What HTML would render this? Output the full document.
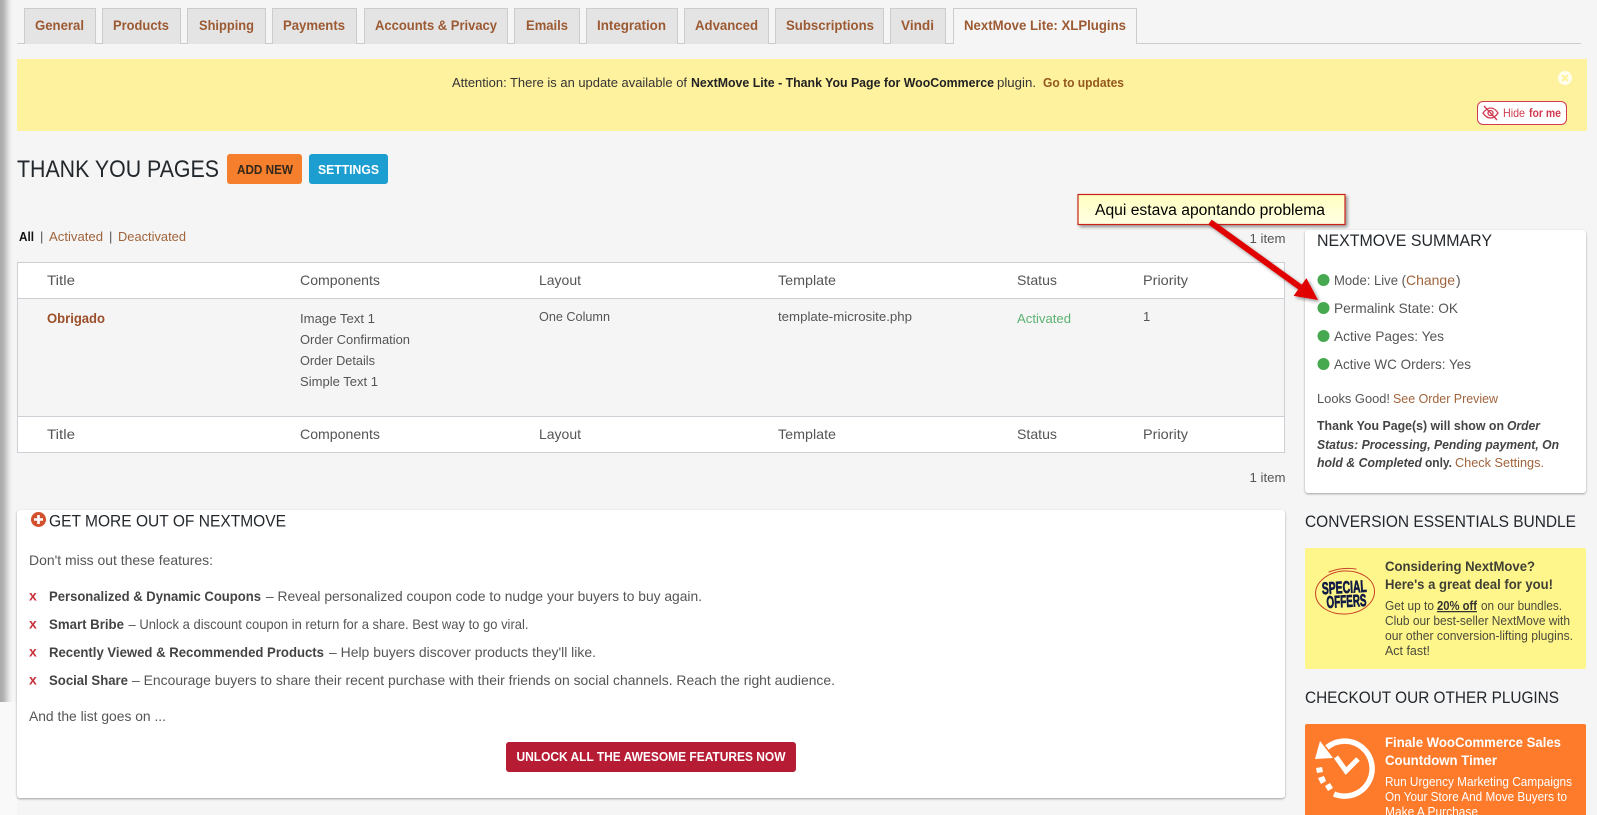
<!DOCTYPE html>
<html lang="en"><head><meta charset="utf-8"><title>Thank You Pages</title>
<style>
html,body{margin:0;padding:0;width:1597px;height:815px;overflow:hidden;background:#f5f5f5}
.b{position:absolute;box-sizing:border-box}
.tab{top:8px;height:36px;background:#e4e4e4;border:1px solid #ccc;border-bottom:0}
svg{position:absolute;left:0;top:0}
text{font-family:"Liberation Sans",Arial,sans-serif;font-size:13.5px;fill:#555}
.t{font-size:14px;font-weight:700;fill:#9c5a33}
.h{font-size:14px}
.n{font-size:13px}
.l{fill:#a0643c}
.k{fill:#444;font-weight:700}
.s{font-size:17px;fill:#23282d}
.w{fill:#fff}
</style></head>
<body>
<div class="b" style="left:0;top:0;width:12px;height:702px;background:linear-gradient(90deg,#a8a8a8 0,#b4b4b4 30%,#e4e4e4 75%,#f5f5f5 100%)"></div>
<div class="b" style="left:0;top:702px;width:17px;height:113px;background:#f9f9f9"></div>
<div class="b" style="left:17px;top:43px;width:1564px;height:1px;background:#ccc"></div>
<div class="b tab" style="left:24px;width:72px"></div>
<div class="b tab" style="left:102px;width:79px"></div>
<div class="b tab" style="left:187px;width:79px"></div>
<div class="b tab" style="left:272px;width:85px"></div>
<div class="b tab" style="left:364px;width:144px"></div>
<div class="b tab" style="left:514px;width:66px"></div>
<div class="b tab" style="left:586px;width:92px"></div>
<div class="b tab" style="left:684px;width:85px"></div>
<div class="b tab" style="left:775px;width:109px"></div>
<div class="b tab" style="left:890px;width:56px"></div>
<div class="b tab" style="left:953px;width:184px;background:#f5f5f5"></div>
<div class="b" style="left:17px;top:59px;width:1570px;height:72px;background:#fff29f"></div>
<div class="b" style="left:1477px;top:101px;width:90px;height:24px;background:#fff;border:1px solid #d23a50;border-radius:6px"></div>
<div class="b" style="left:227px;top:154px;width:75px;height:30px;background:#f57f2c;border-radius:3px"></div>
<div class="b" style="left:309px;top:154px;width:79px;height:30px;background:#1c9ed1;border-radius:3px"></div>
<div class="b" style="left:17px;top:262px;width:1268px;height:191px;background:#f5f5f5;border:1px solid #ccd0d4"></div>
<div class="b" style="left:18px;top:263px;width:1266px;height:36px;background:#fff;border-bottom:1px solid #ccd0d4"></div>
<div class="b" style="left:18px;top:416px;width:1266px;height:36px;background:#fff;border-top:1px solid #ccd0d4"></div>
<div class="b" style="left:1305px;top:230px;width:281px;height:263px;background:#fff;border-radius:3px;box-shadow:0 1px 2px rgba(0,0,0,.35)"></div>
<div class="b" style="left:17px;top:510px;width:1268px;height:288px;background:#fff;border-radius:3px;box-shadow:0 1px 2px rgba(0,0,0,.35)"></div>
<div class="b" style="left:506px;top:742px;width:290px;height:30px;background:#b71c35;border-radius:3px"></div>
<div class="b" style="left:1305px;top:548px;width:281px;height:121px;background:#fef68a;border-radius:2px"></div>
<div class="b" style="left:1305px;top:724px;width:281px;height:91px;background:#fe7b2c;border-radius:2px 2px 0 0"></div>
<svg width="1597" height="815" viewBox="0 0 1597 815" xmlns="http://www.w3.org/2000/svg">
<defs><filter id="sh" x="-20%" y="-20%" width="140%" height="140%"><feDropShadow dx="2" dy="2" stdDeviation="1.5" flood-color="#000" flood-opacity=".4"/></filter>
<linearGradient id="cg" x1="0" y1="0" x2="0" y2="1"><stop offset="0" stop-color="#ffffc0"/><stop offset="1" stop-color="#ffffe4"/></linearGradient></defs>
<text class="t" x="35" y="30" textLength="49" lengthAdjust="spacingAndGlyphs">General</text>
<text class="t" x="113" y="30" textLength="56" lengthAdjust="spacingAndGlyphs">Products</text>
<text class="t" x="199" y="30" textLength="55" lengthAdjust="spacingAndGlyphs">Shipping</text>
<text class="t" x="283" y="30" textLength="62" lengthAdjust="spacingAndGlyphs">Payments</text>
<text class="t" x="375" y="30" textLength="122" lengthAdjust="spacingAndGlyphs">Accounts &amp; Privacy</text>
<text class="t" x="526" y="30" textLength="42" lengthAdjust="spacingAndGlyphs">Emails</text>
<text class="t" x="597" y="30" textLength="69" lengthAdjust="spacingAndGlyphs">Integration</text>
<text class="t" x="695" y="30" textLength="63" lengthAdjust="spacingAndGlyphs">Advanced</text>
<text class="t" x="786" y="30" textLength="88" lengthAdjust="spacingAndGlyphs">Subscriptions</text>
<text class="t" x="901" y="30" textLength="33" lengthAdjust="spacingAndGlyphs">Vindi</text>
<text class="t" x="964" y="30" textLength="162" lengthAdjust="spacingAndGlyphs">NextMove Lite: XLPlugins</text>

<text class="n" style="fill:#333" x="452" y="87" textLength="235" lengthAdjust="spacingAndGlyphs">Attention: There is an update available of</text>
<text class="n" style="fill:#222;font-weight:700" x="691" y="87" textLength="303" lengthAdjust="spacingAndGlyphs">NextMove Lite - Thank You Page for WooCommerce</text>
<text class="n" style="fill:#333" x="997" y="87" textLength="39" lengthAdjust="spacingAndGlyphs">plugin.</text>
<text class="n" style="fill:#93591f;font-weight:700" x="1043" y="87" textLength="81" lengthAdjust="spacingAndGlyphs">Go to updates</text>
<circle cx="1565" cy="78" r="7" fill="#fff" fill-opacity=".8"/>
<path d="M1562 75l6 6m0-6l-6 6" stroke="#fff29f" stroke-width="2"/>
<g fill="none" stroke="#d23a50" stroke-width="1.3"><path d="M1483 113c3-4 5-5 7.500-5s5 1 7.500 5c-2.500 4-5 5-7.500 5s-5-1-7.500-5z"/><circle cx="1490.500" cy="113" r="2.500"/><path d="M1484 106l13 14"/></g>
<text class="n" style="fill:#d23a50;font-size:12px" x="1503" y="117" textLength="22" lengthAdjust="spacingAndGlyphs">Hide</text>
<text class="n" style="fill:#d23a50;font-size:12px;font-weight:700" x="1529" y="117" textLength="32" lengthAdjust="spacingAndGlyphs">for me</text>

<text style="font-size:24px;fill:#23282d" x="17" y="177" textLength="202" lengthAdjust="spacingAndGlyphs">THANK YOU PAGES</text>
<text class="n" style="fill:#32281c;font-weight:700" x="237" y="174" textLength="56" lengthAdjust="spacingAndGlyphs">ADD NEW</text>
<text class="n w" style="font-weight:700" x="318" y="174" textLength="61" lengthAdjust="spacingAndGlyphs">SETTINGS</text>

<text class="n" style="fill:#111;font-weight:700" x="19" y="241" textLength="15" lengthAdjust="spacingAndGlyphs">All</text>
<text class="n" x="40" y="241">|</text>
<text class="n l" x="49" y="241" textLength="54" lengthAdjust="spacingAndGlyphs">Activated</text>
<text class="n" x="109" y="241">|</text>
<text class="n l" x="118" y="241" textLength="68" lengthAdjust="spacingAndGlyphs">Deactivated</text>
<text class="n" x="1249.500" y="243" textLength="36" lengthAdjust="spacingAndGlyphs">1 item</text>

<text class="h" x="47" y="285" textLength="28" lengthAdjust="spacingAndGlyphs">Title</text>
<text class="h" x="300" y="285" textLength="80" lengthAdjust="spacingAndGlyphs">Components</text>
<text class="h" x="539" y="285" textLength="42" lengthAdjust="spacingAndGlyphs">Layout</text>
<text class="h" x="778" y="285" textLength="58" lengthAdjust="spacingAndGlyphs">Template</text>
<text class="h" x="1017" y="285" textLength="40" lengthAdjust="spacingAndGlyphs">Status</text>
<text class="h" x="1143" y="285" textLength="45" lengthAdjust="spacingAndGlyphs">Priority</text>

<text class="h" style="font-weight:700;fill:#9c4f2a" x="47" y="323" textLength="58" lengthAdjust="spacingAndGlyphs">Obrigado</text>
<text class="n" x="300" y="323" textLength="75" lengthAdjust="spacingAndGlyphs">Image Text 1</text>
<text class="n" x="300" y="344" textLength="110" lengthAdjust="spacingAndGlyphs">Order Confirmation</text>
<text class="n" x="300" y="365" textLength="75" lengthAdjust="spacingAndGlyphs">Order Details</text>
<text class="n" x="300" y="386" textLength="78" lengthAdjust="spacingAndGlyphs">Simple Text 1</text>
<text class="n" x="539" y="321" textLength="71" lengthAdjust="spacingAndGlyphs">One Column</text>
<text class="n" x="778" y="321" textLength="134" lengthAdjust="spacingAndGlyphs">template-microsite.php</text>
<text class="n" style="fill:#5cb270" x="1017" y="323" textLength="54" lengthAdjust="spacingAndGlyphs">Activated</text>
<text class="n" x="1143" y="321">1</text>

<text class="h" x="47" y="439" textLength="28" lengthAdjust="spacingAndGlyphs">Title</text>
<text class="h" x="300" y="439" textLength="80" lengthAdjust="spacingAndGlyphs">Components</text>
<text class="h" x="539" y="439" textLength="42" lengthAdjust="spacingAndGlyphs">Layout</text>
<text class="h" x="778" y="439" textLength="58" lengthAdjust="spacingAndGlyphs">Template</text>
<text class="h" x="1017" y="439" textLength="40" lengthAdjust="spacingAndGlyphs">Status</text>
<text class="h" x="1143" y="439" textLength="45" lengthAdjust="spacingAndGlyphs">Priority</text>
<text class="n" x="1249.500" y="482" textLength="36" lengthAdjust="spacingAndGlyphs">1 item</text>

<text class="s" x="1317" y="246" textLength="175" lengthAdjust="spacingAndGlyphs">NEXTMOVE SUMMARY</text>
<circle cx="1323.500" cy="280" r="6" fill="#46a950"/><circle cx="1323.500" cy="308" r="6" fill="#46a950"/><circle cx="1323.500" cy="336" r="6" fill="#46a950"/><circle cx="1323.500" cy="364" r="6" fill="#46a950"/>
<text class="h" x="1334" y="285" textLength="72" lengthAdjust="spacingAndGlyphs">Mode: Live (</text>
<text class="h l" x="1406" y="285" textLength="49" lengthAdjust="spacingAndGlyphs">Change</text>
<text class="h" x="1456" y="285">)</text>
<text class="h" x="1334" y="313" textLength="124" lengthAdjust="spacingAndGlyphs">Permalink State: OK</text>
<text class="h" x="1334" y="341" textLength="110" lengthAdjust="spacingAndGlyphs">Active Pages: Yes</text>
<text class="h" x="1334" y="369" textLength="137" lengthAdjust="spacingAndGlyphs">Active WC Orders: Yes</text>
<text class="n" x="1317" y="403" textLength="73" lengthAdjust="spacingAndGlyphs">Looks Good!</text>
<text class="n l" x="1393" y="403" textLength="105" lengthAdjust="spacingAndGlyphs">See Order Preview</text>
<text class="n k" x="1317" y="430" textLength="187" lengthAdjust="spacingAndGlyphs">Thank You Page(s) will show on</text>
<text class="n k" style="font-style:italic" x="1507" y="430" textLength="33" lengthAdjust="spacingAndGlyphs">Order</text>
<text class="n k" style="font-style:italic" x="1317" y="449" textLength="242" lengthAdjust="spacingAndGlyphs">Status: Processing, Pending payment, On</text>
<text class="n k" style="font-style:italic" x="1317" y="467" textLength="105" lengthAdjust="spacingAndGlyphs">hold &amp; Completed</text>
<text class="n k" x="1425" y="467" textLength="27" lengthAdjust="spacingAndGlyphs">only.</text>
<text class="n l" x="1455" y="467" textLength="89" lengthAdjust="spacingAndGlyphs">Check Settings.</text>

<text class="s" x="1305" y="527" textLength="271" lengthAdjust="spacingAndGlyphs">CONVERSION ESSENTIALS BUNDLE</text>
<g transform="rotate(-4 1345 592)"><ellipse cx="1345" cy="592.500" rx="29.500" ry="21.500" fill="none" stroke="#c8402a" stroke-width="1"/><path d="M1330 571c10-3 20-3 28-1" fill="none" stroke="#c8402a" stroke-width="1"/></g>
<g transform="rotate(-3 1345 592)">
<text style="fill:#101a44;font-size:17px;font-weight:700;stroke:#101a44;stroke-width:.7" x="1322" y="593" textLength="45" lengthAdjust="spacingAndGlyphs">SPECIAL</text>
<text style="fill:#101a44;font-size:17px;font-weight:700;stroke:#101a44;stroke-width:.7" x="1326" y="607" textLength="40" lengthAdjust="spacingAndGlyphs">OFFERS</text></g>
<text class="h" style="font-weight:700;fill:#3f3f35" x="1385" y="571" textLength="150" lengthAdjust="spacingAndGlyphs">Considering NextMove?</text>
<text class="h" style="font-weight:700;fill:#3f3f35" x="1385" y="589" textLength="168" lengthAdjust="spacingAndGlyphs">Here's a great deal for you!</text>
<text class="n" style="fill:#4a4a3c;font-size:12.5px" x="1385" y="610" textLength="49" lengthAdjust="spacingAndGlyphs">Get up to</text>
<text class="n" style="fill:#333;font-size:12.5px;font-weight:700;text-decoration:underline" x="1437" y="610" textLength="40" lengthAdjust="spacingAndGlyphs">20% off</text>
<text class="n" style="fill:#4a4a3c;font-size:12.5px" x="1481" y="610" textLength="81" lengthAdjust="spacingAndGlyphs">on our bundles.</text>
<text class="n" style="fill:#4a4a3c;font-size:12.5px" x="1385" y="625" textLength="185" lengthAdjust="spacingAndGlyphs">Club our best-seller NextMove with</text>
<text class="n" style="fill:#4a4a3c;font-size:12.5px" x="1385" y="640" textLength="188" lengthAdjust="spacingAndGlyphs">our other conversion-lifting plugins.</text>
<text class="n" style="fill:#4a4a3c;font-size:12.5px" x="1385" y="655" textLength="45" lengthAdjust="spacingAndGlyphs">Act fast!</text>

<text class="s" x="1305" y="703" textLength="254" lengthAdjust="spacingAndGlyphs">CHECKOUT OUR OTHER PLUGINS</text>
<g fill="none" stroke="#fff" stroke-linecap="butt">
<path d="M1327 747.500A27.500 27.500 0 1 1 1334 794" stroke-width="5.500"/>
<path d="M1336 757l10 14 12-12" stroke-width="5"/>
</g>
<g fill="#fff"><path d="M1320 741l-5 18 18-1z"/><path d="M1316 768l6-1 1 5-6 1z"/><path d="M1318 778l6-2 2 5-5 3z"/><path d="M1325 786l5-3 3 5-5 3z"/></g>
<text class="h w" style="font-weight:700" x="1385" y="747" textLength="176" lengthAdjust="spacingAndGlyphs">Finale WooCommerce Sales</text>
<text class="h w" style="font-weight:700" x="1385" y="765" textLength="112" lengthAdjust="spacingAndGlyphs">Countdown Timer</text>
<text class="n w" style="font-size:12.5px" x="1385" y="786" textLength="187" lengthAdjust="spacingAndGlyphs">Run Urgency Marketing Campaigns</text>
<text class="n w" style="font-size:12.5px" x="1385" y="801" textLength="182" lengthAdjust="spacingAndGlyphs">On Your Store And Move Buyers to</text>
<text class="n w" style="font-size:12.5px" x="1385" y="816" textLength="93" lengthAdjust="spacingAndGlyphs">Make A Purchase</text>

<circle cx="38.500" cy="519.500" r="7.500" fill="#d2502e"/><path d="M38.500 515v9M34 519.500h9" stroke="#fff" stroke-width="2.600"/>
<text class="s" style="font-size:16.500px" x="49" y="526.500" textLength="237" lengthAdjust="spacingAndGlyphs">GET MORE OUT OF NEXTMOVE</text>
<text class="h" x="29" y="565" textLength="184" lengthAdjust="spacingAndGlyphs">Don't miss out these features:</text>
<text class="h" style="fill:#c8303c;font-weight:700" x="29" y="600.500">x</text><text class="h" style="fill:#c8303c;font-weight:700" x="29" y="628.500">x</text><text class="h" style="fill:#c8303c;font-weight:700" x="29" y="656.500">x</text><text class="h" style="fill:#c8303c;font-weight:700" x="29" y="684.500">x</text>
<text class="h k" x="49" y="601" textLength="212" lengthAdjust="spacingAndGlyphs">Personalized &amp; Dynamic Coupons</text>
<text class="h" x="266" y="601" textLength="436" lengthAdjust="spacingAndGlyphs">– Reveal personalized coupon code to nudge your buyers to buy again.</text>
<text class="h k" x="49" y="629" textLength="75" lengthAdjust="spacingAndGlyphs">Smart Bribe</text>
<text class="h" x="128.500" y="629" textLength="400" lengthAdjust="spacingAndGlyphs">– Unlock a discount coupon in return for a share. Best way to go viral.</text>
<text class="h k" x="49" y="657" textLength="275" lengthAdjust="spacingAndGlyphs">Recently Viewed &amp; Recommended Products</text>
<text class="h" x="329" y="657" textLength="267" lengthAdjust="spacingAndGlyphs">– Help buyers discover products they'll like.</text>
<text class="h k" x="49" y="685" textLength="79" lengthAdjust="spacingAndGlyphs">Social Share</text>
<text class="h" x="132" y="685" textLength="703" lengthAdjust="spacingAndGlyphs">– Encourage buyers to share their recent purchase with their friends on social channels. Reach the right audience.</text>
<text class="h" x="29" y="721" textLength="137" lengthAdjust="spacingAndGlyphs">And the list goes on ...</text>
<text class="n w" style="font-size:12.5px;font-weight:700" x="516.500" y="761" textLength="269" lengthAdjust="spacingAndGlyphs">UNLOCK ALL THE AWESOME FEATURES NOW</text>

<rect x="1078" y="194.500" width="267" height="30" fill="url(#cg)" stroke="#c8201c" stroke-width="1.200" filter="url(#sh)"/>
<text style="font-size:15.500px;fill:#000" x="1095" y="215" textLength="230" lengthAdjust="spacingAndGlyphs">Aqui estava apontando problema</text>
<path d="M1211.700 219.600L1301.800 284.600L1306.400 278.100L1318 300L1293.600 295.900L1298.200 289.400L1208.300 224.400Z" fill="#e00000" filter="url(#sh)"/>
</svg>
</body></html>
